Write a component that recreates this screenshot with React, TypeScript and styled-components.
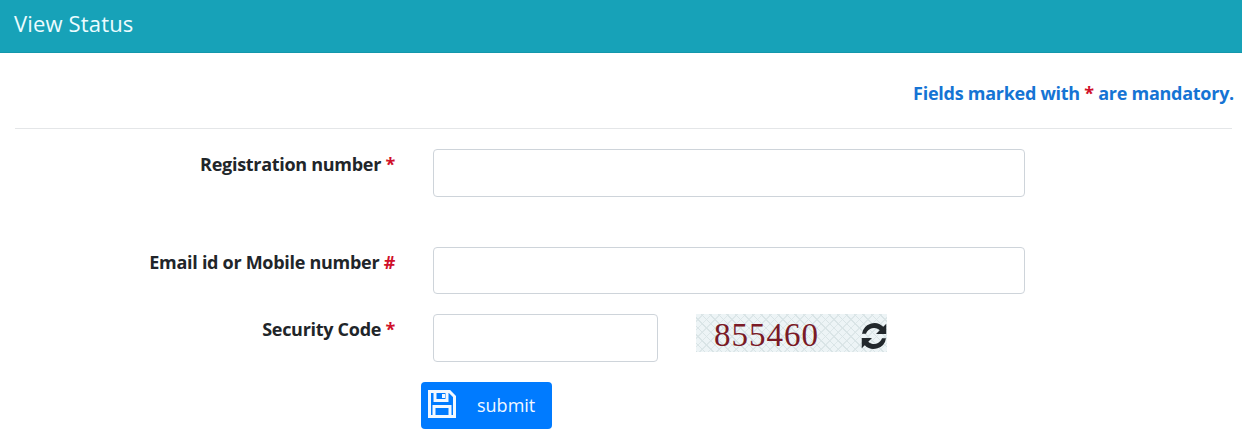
import React from "react";
import styled, { createGlobalStyle } from "styled-components";

const Global = createGlobalStyle`
  html, body { margin: 0; padding: 0; background: #fff; }
  body { font-family: "Open Sans", "Noto Sans", sans-serif; width: 1242px; height: 445px; overflow: hidden; }
`;
const Header = styled.header`
  box-sizing: content-box; height: 46px; background: #17a2b8; border-bottom: 1px solid #1497ab;
  display: flex; align-items: center; padding: 0 0 6px 14px;
  color: #ecfcff; font-size: 22px; font-family: "Open Sans", sans-serif; letter-spacing: 0.16px;
`;
const Notice = styled.p`
  margin: 0; height: 75px; box-sizing: border-box; padding: 26px 8px 0 0; text-align: right;
  font-size: 18px; line-height: 28px; font-weight: 700; color: #1574d4; letter-spacing: -0.27px;
`;
const Mark = styled.span`color: #d0102a;`;
const Form = styled.form`
  margin: 0 10px 0 15px; border-top: 1px solid #e4e6e8; padding-top: 20px;
  display: flex; flex-direction: column;
`;
const Row = styled.div<{ $h: number }>`
  display: grid; grid-template-columns: 380px 592px; column-gap: 38px; height: ${p => p.$h}px;
`;
const Label = styled.label`
  text-align: right; font-size: 18px; line-height: 30px; font-weight: 700; color: #212529; letter-spacing: -0.29px;
`;
const Field = styled.input<{ $w?: number; $h?: number }>`
  display: block; box-sizing: border-box; width: ${p => p.$w ?? 592}px; height: ${p => p.$h ?? 48}px;
  border: 1px solid #ced4da; border-radius: 4px; background: #fff; padding: 0; margin: 0;
`;
const CaptchaRow = styled.div`display: flex; align-items: flex-start;`;
const Captcha = styled.div`
  width: 191px; height: 38px; margin: 0 0 0 38px; box-sizing: border-box; padding: 4px 0 0 18px;
  background-color: #edf4f6;
  background-image:
    repeating-linear-gradient(45deg, #d9e4e6 0 1px, transparent 1px 6px),
    repeating-linear-gradient(-45deg, #dde7e9 0 1px, transparent 1px 6px);
  display: flex; align-items: center; justify-content: space-between;
  font: 33px/34px "Liberation Serif", serif; color: #7a1a26; letter-spacing: 1px;
`;
const Refresh = styled.svg`width: 30px; height: 30px; fill: #22282c; display: block; margin: 2px -2px 0 0;`;
const SubmitRow = styled.div`padding-left: 406px; margin-top: 20px;`;
const Submit = styled.button`
  width: 131px; height: 47px; border: 0; border-radius: 4px; background: #007bff; color: #f2f8ff;
  display: flex; align-items: center; padding: 0 0 0 6px; font: 400 18px "Open Sans", sans-serif; letter-spacing: 0;
  svg { width: 30px; height: 30px; display: block; margin-top: -3px; }
  span { margin-left: 20px; margin-top: -1px; }
`;

export default function App() {
  return (
    <>
      <Global />
      <Header>View Status</Header>
      <Notice>Fields marked with <Mark>*</Mark> are mandatory.</Notice>
      <Form onSubmit={e => e.preventDefault()}>
        <Row $h={98}>
          <Label>Registration number <Mark>*</Mark></Label>
          <Field />
        </Row>
        <Row $h={67}>
          <Label>Email id or Mobile number <Mark>#</Mark></Label>
          <Field $h={47} />
        </Row>
        <Row $h={48}>
          <Label>Security Code <Mark>*</Mark></Label>
          <CaptchaRow>
            <Field $w={225} />
            <Captcha>
              855460
              <Refresh viewBox="0 0 24 24"><path d="M19.4 4.6 21.8 2.2V10.4h-8.2l3-3a6.8 6.8 0 0 0-11 2.8H2.4A10 10 0 0 1 19.4 4.6zM4.6 19.4 2.2 21.8V13.6h8.2l-3 3a6.8 6.8 0 0 0 11-2.8h3.2A10 10 0 0 1 4.6 19.4z" /></Refresh>
            </Captcha>
          </CaptchaRow>
        </Row>
        <SubmitRow>
          <Submit type="submit">
            <svg viewBox="0 0 30 30" fill="none" stroke="#f2f8ff" strokeWidth="3">
              <path d="M2.5 2.5h20l5 5v20h-25z" />
              <path d="M8 2.5v9h12v-9" />
              <path d="M7 27.5v-10h16v10" />
              <path d="M16.5 5v4" />
            </svg>
            <span>submit</span>
          </Submit>
        </SubmitRow>
      </Form>
    </>
  );
}
